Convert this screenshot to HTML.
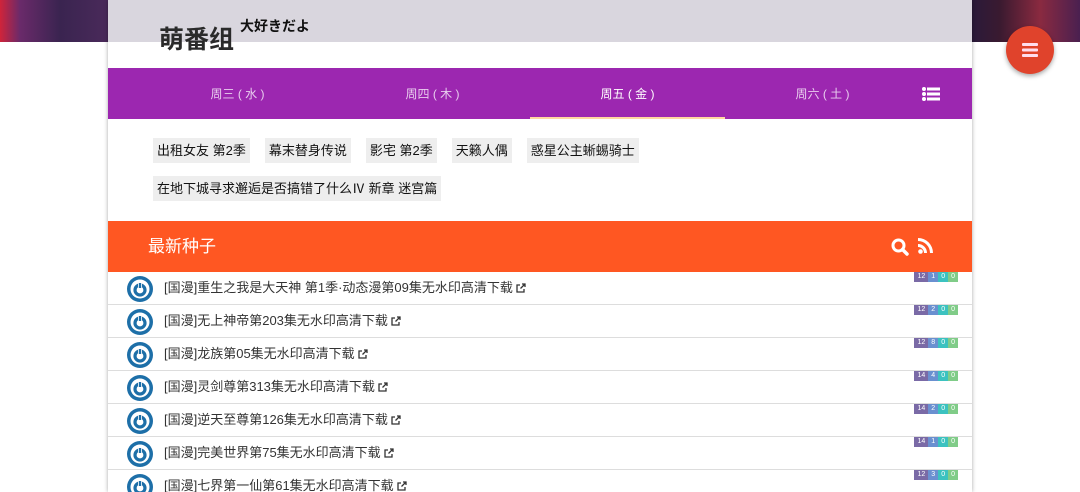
<!DOCTYPE html>
<html><head><meta charset="utf-8"><style>
*{margin:0;padding:0;box-sizing:border-box}
html,body{width:1080px;height:492px;overflow:hidden}
body{background:#fff;font-family:"Liberation Sans","Noto Sans CJK SC",sans-serif;position:relative}
.band{position:absolute;left:0;top:0;width:1080px;height:42px;background:linear-gradient(90deg,#d0243a 0,#6a2a6a 20px,#3a2450 60px,#4a2a5a 108px,#2a1a3a 972px,#3a1a30 1000px,#8a2a40 1040px,#4a2050 1080px)}
.wrap{position:absolute;left:108px;top:0;width:864px;height:492px;background:#fff;box-shadow:0 0 4px rgba(0,0,0,.35);overflow:hidden}
.hdr{height:68px;position:relative}
.hdrimg{position:absolute;left:0;top:0;width:864px;height:42px;background:#d9d6de}
.logo{position:absolute;left:51px;top:20px;font-size:25px;font-weight:bold;color:#2a2a2a}
.logo sup{font-size:14px;position:absolute;left:81px;top:-4px;white-space:nowrap;color:#111}
.nav{height:51px;background:#9c27b0;display:flex;position:relative;padding-left:32px}
.nav div{width:195px;text-align:center;color:#e8cdee;font-size:12px;line-height:52px}
.nav div.a{color:#fff;border-bottom:2px solid #ffd8a0}
.nav .ic{position:absolute;right:32px;top:19px}
.tags{height:102px;padding:19px 0 0 45px}
.tag{display:inline-block;background:#eee;font-size:13px;color:#111;padding:0 4px;height:25px;line-height:25px;margin:0 15px 13px 0}
.bar{height:51px;background:#ff5722;color:#fff;font-size:17px;line-height:51px;padding-left:40px;position:relative}
.row{height:33px;border-bottom:1px solid #ddd;position:relative;font-size:13px;color:#333;line-height:32px;padding-left:56px}
.ci{position:absolute;left:19px;top:4px;width:26px;height:26px}
.bd{position:absolute;right:14px;top:0;display:flex;font-size:7px;color:#fff;line-height:10px;height:10px}
.bd span{padding:0 3px}
.ex{display:inline-block;vertical-align:-1px;margin-left:3px}
.fab{position:absolute;left:1006px;top:26px;width:48px;height:48px;border-radius:50%;background:#e0432c;box-shadow:0 2px 5px rgba(0,0,0,.35)}
</style></head><body>
<div class="band"></div>
<div class="wrap">
<div class="hdr"><div class="hdrimg"></div><div class="logo">萌番组<sup>大好きだよ</sup></div></div>
<div class="nav"><div>周三 ( 水 )</div><div>周四 ( 木 )</div><div class="a">周五 ( 金 )</div><div>周六 ( 土 )</div>
<svg class="ic" width="18" height="14" viewBox="0 0 18 14" fill="#fff"><circle cx="2" cy="2" r="2"/><circle cx="2" cy="7" r="2"/><circle cx="2" cy="12" r="2"/><rect x="5" y="0.5" width="13" height="3"/><rect x="5" y="5.5" width="13" height="3"/><rect x="5" y="10.5" width="13" height="3"/></svg></div>
<div class="tags"><span class="tag">出租女友 第2季</span><span class="tag">幕末替身传说</span><span class="tag">影宅 第2季</span><span class="tag">天籁人偶</span><span class="tag">惑星公主蜥蜴骑士</span><br><span class="tag">在地下城寻求邂逅是否搞错了什么Ⅳ 新章 迷宫篇</span></div>
<div class="bar">最新种子
<svg style="position:absolute;left:783px;top:17px" width="18" height="18" viewBox="0 0 18 18"><circle cx="7.5" cy="7.5" r="5.5" stroke="#fff" stroke-width="3" fill="none"/><path d="M11.5 11.5l4.5 4.5" stroke="#fff" stroke-width="3.5" stroke-linecap="round"/></svg>
<svg style="position:absolute;left:810px;top:17px" width="15" height="16" viewBox="0 0 15 16" fill="#fff"><circle cx="2.5" cy="13.5" r="2.3"/><path d="M0 6a9 9 0 0 1 9 9h-3a6 6 0 0 0-6-6z"/><path d="M0 0a15 15 0 0 1 15 15h-3A12 12 0 0 0 0 3z"/></svg></div>
<svg width="0" height="0" style="position:absolute"><defs>
<symbol id="pw" viewBox="0 0 26 26"><circle cx="13" cy="13" r="13" fill="#1d6fa8"/><circle cx="13" cy="13" r="9.5" fill="#fff"/><circle cx="13" cy="14" r="5" fill="none" stroke="#1d6fa8" stroke-width="3.2"/><rect x="11" y="6" width="4" height="6" fill="#fff"/><rect x="11.8" y="7" width="2.4" height="5" fill="#1d6fa8"/></symbol>
<symbol id="ex" viewBox="0 0 10 10"><path d="M8 6v3H1V2h3" fill="none" stroke="#333" stroke-width="1.3"/><path d="M6 1h3v3M9 1L4.5 5.5" fill="none" stroke="#333" stroke-width="1.3"/></symbol></defs></svg>
<div class="row"><svg class="ci"><use href="#pw"/></svg>[国漫]重生之我是大天神 第1季·动态漫第09集无水印高清下载<svg class="ex" width="10" height="10"><use href="#ex"/></svg><div class="bd"><span style="background:#7a6aa6">12</span><span style="background:#6a90d0">1</span><span style="background:#3cc2c0">0</span><span style="background:#80cc88">0</span></div></div>
<div class="row"><svg class="ci"><use href="#pw"/></svg>[国漫]无上神帝第203集无水印高清下载<svg class="ex" width="10" height="10"><use href="#ex"/></svg><div class="bd"><span style="background:#7a6aa6">12</span><span style="background:#6a90d0">2</span><span style="background:#3cc2c0">0</span><span style="background:#80cc88">0</span></div></div>
<div class="row"><svg class="ci"><use href="#pw"/></svg>[国漫]龙族第05集无水印高清下载<svg class="ex" width="10" height="10"><use href="#ex"/></svg><div class="bd"><span style="background:#7a6aa6">12</span><span style="background:#6a90d0">8</span><span style="background:#3cc2c0">0</span><span style="background:#80cc88">0</span></div></div>
<div class="row"><svg class="ci"><use href="#pw"/></svg>[国漫]灵剑尊第313集无水印高清下载<svg class="ex" width="10" height="10"><use href="#ex"/></svg><div class="bd"><span style="background:#7a6aa6">14</span><span style="background:#6a90d0">4</span><span style="background:#3cc2c0">0</span><span style="background:#80cc88">0</span></div></div>
<div class="row"><svg class="ci"><use href="#pw"/></svg>[国漫]逆天至尊第126集无水印高清下载<svg class="ex" width="10" height="10"><use href="#ex"/></svg><div class="bd"><span style="background:#7a6aa6">14</span><span style="background:#6a90d0">2</span><span style="background:#3cc2c0">0</span><span style="background:#80cc88">0</span></div></div>
<div class="row"><svg class="ci"><use href="#pw"/></svg>[国漫]完美世界第75集无水印高清下载<svg class="ex" width="10" height="10"><use href="#ex"/></svg><div class="bd"><span style="background:#7a6aa6">14</span><span style="background:#6a90d0">1</span><span style="background:#3cc2c0">0</span><span style="background:#80cc88">0</span></div></div>
<div class="row"><svg class="ci"><use href="#pw"/></svg>[国漫]七界第一仙第61集无水印高清下载<svg class="ex" width="10" height="10"><use href="#ex"/></svg><div class="bd"><span style="background:#7a6aa6">12</span><span style="background:#6a90d0">3</span><span style="background:#3cc2c0">0</span><span style="background:#80cc88">0</span></div></div>
</div>
<div class="fab"><svg style="position:absolute;left:16px;top:17px" width="16" height="14" viewBox="0 0 16 14" fill="#fde"><rect y="0" width="16" height="3" rx="1"/><rect y="5.5" width="16" height="3" rx="1"/><rect y="11" width="16" height="3" rx="1"/></svg></div>
</body></html>
